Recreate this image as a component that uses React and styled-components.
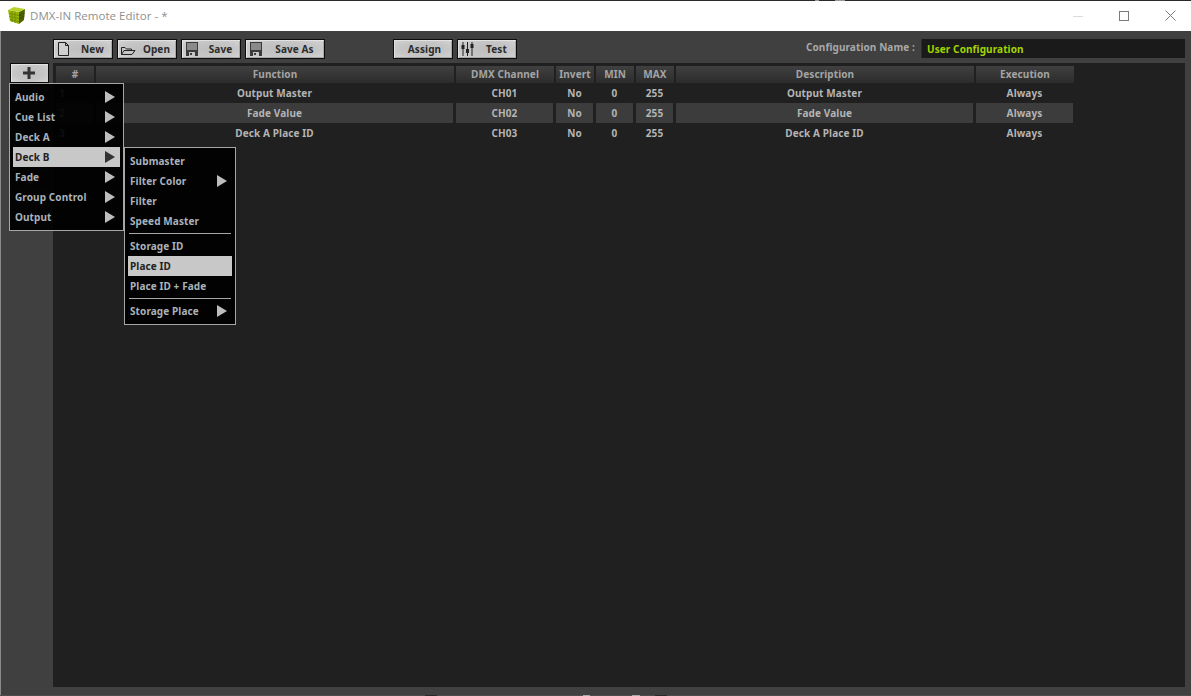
import React from 'react';
import styled, { createGlobalStyle } from 'styled-components';

const GlobalStyle = createGlobalStyle`
  html, body {
    margin: 0;
    padding: 0;
    background: #404040;
    overflow: hidden;
  }
  * { box-sizing: border-box; }
`;

const Window = styled.div`
  width: 1191px;
  height: 696px;
  display: flex;
  flex-direction: column;
  font-family: "Noto Sans", "Open Sans", sans-serif;
  font-size: 10px;
  font-weight: 700;
  letter-spacing: 0.1px;
  background: #404040;
`;

const BackdropStrip = styled.div`
  height: 1px;
  flex: none;
  background: ${p => p.$bg};
`;

const TitleBar = styled.div`
  height: 30px;
  flex: none;
  background: #fff;
  display: flex;
  align-items: center;
  padding: 0 0 1px 8px;
`;

const TitleText = styled.div`
  margin-left: 5px;
  font-family: "Open Sans", "Noto Sans", sans-serif;
  font-weight: 400;
  font-size: 11.5px;
  letter-spacing: 0.04px;
  color: #8f8f8f;
`;

const WindowControls = styled.div`
  margin-left: auto;
  margin-right: -2px;
  display: flex;
  height: 100%;
`;

const WindowControl = styled.div`
  width: 46px;
  display: flex;
  align-items: center;
  justify-content: center;
`;

const Body = styled.div`
  flex: 1;
  min-height: 0;
  display: flex;
  flex-direction: column;
  border-left: 1px solid #8a8a8a;
  padding: 8px 6px 8px 9px;
`;

const Toolbar = styled.div`
  height: 20px;
  flex: none;
  display: flex;
  align-items: flex-start;
  gap: 4px;
  padding-left: 43px;
  margin-bottom: 4px;
`;

const ToolButton = styled.div`
  width: ${p => p.$width}px;
  height: 20px;
  flex: none;
  display: flex;
  align-items: center;
  padding-left: 3px;
  margin-left: ${p => p.$offset || 0}px;
  border: 1px solid #0c0c0c;
  color: #2c2c2c;
  background: radial-gradient(ellipse at center, #bdbdbd 0%, #c6c6c6 60%, #d6d6d6 100%);
  box-shadow: inset 1px 1px 0 #e2e2e2, inset -1px -1px 0 #a8a8a8;
`;

const ButtonIcon = styled.div`
  width: 16px;
  height: 16px;
  flex: none;
`;

const ButtonLabel = styled.div`
  flex: 1;
  text-align: center;
`;

const ConfigGroup = styled.div`
  margin-left: auto;
  display: flex;
  align-items: flex-start;
  gap: 6px;
`;

const ConfigLabel = styled.div`
  color: #a8a8a8;
  line-height: 17px;
`;

const ConfigInput = styled.div`
  width: 264px;
  height: 19px;
  padding: 4px 0 0 5px;
  line-height: 13px;
  background: #1a1a1a;
  border-left: 1px solid #2c2c2c;
  color: #a2d400;
`;

const Main = styled.div`
  flex: 1;
  min-height: 0;
  display: flex;
  gap: 4px;
`;

const SideColumn = styled.div`
  width: 39px;
  flex: none;
  display: flex;
  flex-direction: column;
  gap: 1px;
`;

const PlusWrap = styled.div`
  position: relative;
  height: 20px;
  z-index: 2;
`;

const PlusButton = styled.div`
  height: 20px;
  display: flex;
  align-items: center;
  justify-content: center;
  padding-right: 1px;
  border: 1px solid #0c0c0c;
  background: radial-gradient(ellipse at center, #bdbdbd 0%, #c6c6c6 60%, #d6d6d6 100%);
  box-shadow: inset 1px 1px 0 #e2e2e2;
`;

const SideButton = styled.div`
  height: 20px;
  flex: none;
  margin-top: ${p => p.$top || 0}px;
  display: flex;
  align-items: center;
  justify-content: center;
  background: #2e2e2e;
`;

const Panel = styled.div`
  flex: 1;
  min-width: 0;
  background: #202020;
  padding: 3px 0 0 3px;
`;

const COLUMNS = '38px 358px 98px 38px 38px 38px 298px 98px';

const HeaderRow = styled.div`
  display: grid;
  grid-template-columns: ${COLUMNS};
  column-gap: 2px;
  height: 17px;
`;

const HeaderCell = styled.div`
  display: flex;
  align-items: center;
  justify-content: center;
  padding-bottom: 1px;
  color: #a4a4a4;
  background: linear-gradient(#404040, #2c2c2c);
`;

const Row = styled.div`
  display: grid;
  grid-template-columns: ${COLUMNS};
  column-gap: 2px;
  height: 20px;
`;

const Cell = styled.div`
  display: flex;
  align-items: center;
  justify-content: ${p => (p.$left ? 'flex-start' : 'center')};
  padding-left: ${p => (p.$left ? 3 : 0)}px;
  margin-right: 1px;
  color: #b4b4b4;
  background: ${p => (p.$alt ? '#3c3c3c' : 'transparent')};
`;

const Menu = styled.div`
  position: absolute;
  left: ${p => p.$left}px;
  top: ${p => p.$top};
  width: ${p => p.$width}px;
  padding: 3px;
  background: rgba(0, 0, 0, 0.93);
  border: 1px solid #a6a6a6;
  z-index: 5;
`;

const MenuItem = styled.div`
  position: relative;
  height: 20px;
  display: flex;
  align-items: center;
  justify-content: space-between;
  padding: 0 5px 0 2px;
  color: ${p => (p.$active ? '#222' : '#aab2ba')};
  background: ${p => (p.$active ? '#c8c8c8' : 'transparent')};
`;

const Arrow = styled.div`
  width: 0;
  height: 0;
  border-top: 6.5px solid transparent;
  border-bottom: 6.5px solid transparent;
  border-left: 10px solid ${p => (p.$active ? '#333' : '#bdbdbd')};
`;

const Separator = styled.div`
  height: 5px;
  display: flex;
  align-items: center;
  padding: 0 1px;
  &::after {
    content: '';
    display: block;
    width: 100%;
    height: 1px;
    background: #a6a6a6;
  }
`;

const Logo = () => (
  <svg width="17" height="17" viewBox="0 0 17 17">
    <polygon points="0,3 11,5 11,17 2,14" fill="#93b400" />
    <polygon points="11,5 17,2 16,13 11,17" fill="#4e6200" />
    <polygon points="0,3 6,0 17,2 11,5" fill="#b8d22c" />
    <path d="M1 6.5L11 8.5M1 9.5L11 11.5M2 12.5L11 14.5M4 4V15M7 4.5V16" stroke="#6e8800" strokeWidth="0.8" fill="none" />
    <path d="M11 9L17 6M11 12L16.5 9" stroke="#384600" strokeWidth="0.8" fill="none" />
  </svg>
);

const NewIcon = () => (
  <svg width="16" height="16" viewBox="0 0 16 16">
    <path d="M1.5 1.5H8.5L11.5 4.5V14.5H1.5Z M8.5 1.5V4.5H11.5" fill="#cfcfcf" stroke="#222" strokeWidth="1" />
  </svg>
);

const OpenIcon = () => (
  <svg width="16" height="16" viewBox="0 0 16 16">
    <path d="M0.5 13.5V6.5H4L5.5 8H10.5V9.5M0.5 13.5L3 9.5H14L11 13.5Z" fill="none" stroke="#222" strokeWidth="1" />
  </svg>
);

const SaveIcon = () => (
  <svg width="16" height="16" viewBox="0 0 16 16">
    <rect x="1" y="1" width="12" height="14" fill="#3a3a3a" />
    <rect x="2" y="2" width="10" height="7" fill="#8a8a8a" />
    <rect x="4" y="11" width="6" height="4" fill="#c4c4c4" />
    <rect x="5" y="12" width="2" height="2" fill="#3a3a3a" />
  </svg>
);

const TestIcon = () => (
  <svg width="16" height="16" viewBox="0 0 16 16">
    <path d="M2 1V15M6.5 1V15M11 1V15" stroke="#222" strokeWidth="1" />
    <rect x="0.5" y="4" width="3" height="4" fill="#222" />
    <rect x="5" y="8" width="3" height="4" fill="#222" />
    <rect x="9.5" y="3" width="3" height="4" fill="#222" />
  </svg>
);

const Triangle = ({ down }) => (
  <svg width="14" height="10" viewBox="0 0 14 10">
    <polygon points={down ? '0,0 14,0 7,10' : '0,10 14,10 7,0'} fill="#9a9a9a" />
  </svg>
);

const tools = [
  { label: 'New', width: 60, icon: <NewIcon /> },
  { label: 'Open', width: 60, icon: <OpenIcon /> },
  { label: 'Save', width: 60, icon: <SaveIcon /> },
  { label: 'Save As', width: 80, icon: <SaveIcon /> },
  { label: 'Assign', width: 60, offset: 64 },
  { label: 'Test', width: 60, icon: <TestIcon /> },
];

const headers = ['#', 'Function', 'DMX Channel', 'Invert', 'MIN', 'MAX', 'Description', 'Execution'];

const rows = [
  ['1', 'Output Master', 'CH01', 'No', '0', '255', 'Output Master', 'Always'],
  ['2', 'Fade Value', 'CH02', 'No', '0', '255', 'Fade Value', 'Always'],
  ['3', 'Deck A Place ID', 'CH03', 'No', '0', '255', 'Deck A Place ID', 'Always'],
];

const mainItems = ['Audio', 'Cue List', 'Deck A', 'Deck B', 'Fade', 'Group Control', 'Output'];

const SubMenu = () => (
  <Menu $left={111} $top="0" $width={112}>
    <MenuItem>Submaster</MenuItem>
    <MenuItem>Filter Color <Arrow /></MenuItem>
    <MenuItem>Filter</MenuItem>
    <MenuItem>Speed Master</MenuItem>
    <Separator />
    <MenuItem>Storage ID</MenuItem>
    <MenuItem $active>Place ID</MenuItem>
    <MenuItem>Place ID + Fade</MenuItem>
    <Separator />
    <MenuItem>Storage Place <Arrow /></MenuItem>
  </Menu>
);

const App = () => (
  <Window>
    <GlobalStyle />
    <BackdropStrip $bg="linear-gradient(90deg, #2a2a2a 815px, #999 815px, #999 819px, #2a2a2a 819px, #2a2a2a 835px, #999 835px, #999 845px, #2a2a2a 845px)" />
    <TitleBar>
      <Logo />
      <TitleText>DMX-IN Remote Editor - *</TitleText>
      <WindowControls>
        <WindowControl>
          <svg width="10" height="10" viewBox="0 0 10 10">
            <path d="M0 5.5H10" stroke="#dcdcdc" strokeWidth="1" />
          </svg>
        </WindowControl>
        <WindowControl>
          <svg width="10" height="10" viewBox="0 0 10 10">
            <rect x="0.5" y="0.5" width="9" height="9" fill="none" stroke="#7a7a7a" strokeWidth="1" />
          </svg>
        </WindowControl>
        <WindowControl>
          <svg width="11" height="11" viewBox="0 0 11 11">
            <path d="M0.5 0.5L10.5 10.5M10.5 0.5L0.5 10.5" stroke="#7a7a7a" strokeWidth="1" />
          </svg>
        </WindowControl>
      </WindowControls>
    </TitleBar>
    <Body>
      <Toolbar>
        {tools.map(tool => (
          <ToolButton key={tool.label} $width={tool.width} $offset={tool.offset}>
            {tool.icon && <ButtonIcon>{tool.icon}</ButtonIcon>}
            <ButtonLabel>{tool.label}</ButtonLabel>
          </ToolButton>
        ))}
        <ConfigGroup>
          <ConfigLabel>Configuration Name :</ConfigLabel>
          <ConfigInput>User Configuration</ConfigInput>
        </ConfigGroup>
      </Toolbar>
      <Main>
        <SideColumn>
          <PlusWrap>
            <PlusButton>
              <svg width="14" height="14" viewBox="0 0 14 14">
                <path d="M7 1V13M1 7H13" stroke="#333" strokeWidth="3" />
              </svg>
            </PlusButton>
            <Menu $left={-1} $top="100%" $width={115}>
              {mainItems.map(item => (
                <MenuItem key={item} $active={item === 'Deck B'}>
                  {item}
                  <Arrow $active={item === 'Deck B'} />
                  {item === 'Deck B' && <SubMenu />}
                </MenuItem>
              ))}
            </Menu>
          </PlusWrap>
          <SideButton $top={4} />
          <SideButton />
          <SideButton $top={15}><Triangle /></SideButton>
          <SideButton $top={4}><Triangle down /></SideButton>
        </SideColumn>
        <Panel>
          <HeaderRow>
            {headers.map(h => (
              <HeaderCell key={h}>{h}</HeaderCell>
            ))}
          </HeaderRow>
          {rows.map((row, i) => (
            <Row key={row[0]}>
              {row.map((value, j) => (
                <Cell key={j} $alt={i === 1} $left={j === 0}>{value}</Cell>
              ))}
            </Row>
          ))}
        </Panel>
      </Main>
    </Body>
    <BackdropStrip $bg="linear-gradient(90deg, #4c4c4c 425px, #2a2a2a 425px, #2a2a2a 437px, #4c4c4c 437px, #4c4c4c 583px, #aaa 583px, #aaa 590px, #4c4c4c 590px, #4c4c4c 632px, #aaa 632px, #aaa 640px, #4c4c4c 640px, #4c4c4c 655px, #2a2a2a 655px, #2a2a2a 667px, #4c4c4c 667px)" />
  </Window>
);

export default App;
